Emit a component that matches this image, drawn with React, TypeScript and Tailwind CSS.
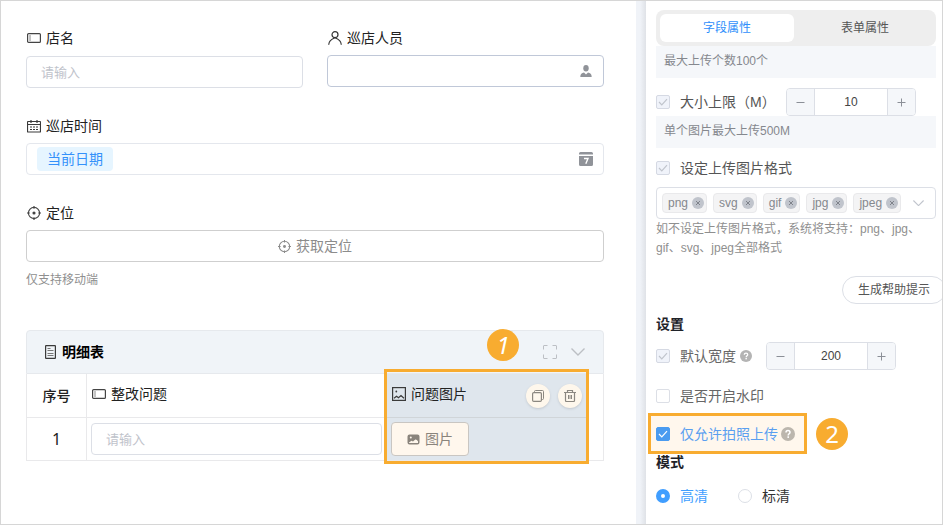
import React, { useState } from 'react';

const FONT = "font-['Liberation_Sans','Noto_Sans_CJK_SC',sans-serif]";

const TextFieldIcon = () => (
  <svg width="14" height="10" viewBox="0 0 14 10" fill="none" stroke="#444" className="shrink-0">
    <rect x="0.6" y="0.6" width="12.8" height="8.8" rx="1" strokeWidth="1.2" />
    <path d="M3 2v6" stroke="#888" />
  </svg>
);

const PersonIcon = () => (
  <svg width="14" height="14" viewBox="0 0 14 14" fill="none" stroke="#333" strokeWidth="1.2" className="shrink-0">
    <circle cx="7" cy="3.7" r="3" />
    <path d="M0.7 13.8c0-3.2 2.2-5.6 6.3-7.1 4.1 1.5 6.3 3.9 6.3 7.1" />
  </svg>
);

const CalendarIcon = () => (
  <svg width="14" height="14" viewBox="0 0 14 14" fill="none" stroke="#3a3a3a" className="shrink-0">
    <rect x="0.5" y="2.5" width="13" height="10.5" rx="0.5" strokeWidth="1.2" />
    <path d="M0.5 5.5h13M4 1v3M10 1v3" strokeWidth="1.2" />
    <path d="M3 8h8M3 10.5h8" strokeDasharray="2 1" />
  </svg>
);

const TargetIcon = ({ size, color }: { size: number; color: string }) => (
  <svg width={size} height={size} viewBox="0 0 15 15" fill="none" stroke={color} strokeWidth="1.2" className="shrink-0">
    <circle cx="7.5" cy="7.5" r="6" />
    <path d="M7.5 0v3M7.5 12v3M0 7.5h3M12 7.5h3" />
    <circle cx="7.5" cy="7.5" r="1.7" fill={color} stroke="none" />
  </svg>
);

const SheetIcon = () => (
  <svg width="11" height="14" viewBox="0 0 11 14" fill="none" stroke="#3a3a3a" className="shrink-0">
    <rect x="0.6" y="0.6" width="9.8" height="12.8" rx="0.5" strokeWidth="1.2" />
    <path d="M2.5 3.5h3M2.5 5.5h6M2.5 8.5h6M2.5 10.5h6" stroke="#777" />
  </svg>
);

const PictureIcon = () => (
  <svg width="14" height="14" viewBox="0 0 14 14" fill="none" stroke="#3a3a3a" className="shrink-0">
    <rect x="0.6" y="0.6" width="12.8" height="12.8" strokeWidth="1.2" />
    <path d="M2 11.2l2.5-2 2 1.500L9 8.500l3 2.700" strokeWidth="1.200" />
    <circle cx="4.3" cy="4.5" r="0.9" fill="#3a3a3a" stroke="none" />
  </svg>
);

const HelpIcon = ({ size, color }: { size: number; color: string }) => (
  <svg width={size} height={size} viewBox="0 0 14 14" fill="none" className="shrink-0">
    <circle cx="7" cy="7" r="7" fill={color} />
    <path d="M5 5.6c0-1.3.8-2 2-2s2 .7 2 1.8C9 6.8 7.2 6.8 7.2 8.4" stroke="#fff" strokeWidth="1.5" />
    <rect x="6.4" y="9.3" width="1.6" height="1.6" fill="#fff" />
  </svg>
);

const Chevron = ({ width, color }: { width: number; color: string }) => (
  <svg width={width} height={width / 2 + 1} viewBox="0 0 14 8" fill="none" stroke={color} strokeWidth="1.4">
    <path d="M0.5 0.5L7 7l6.5-6.5" />
  </svg>
);

interface FieldLabelProps {
  icon: React.ReactNode;
  text: string;
  htmlFor?: string;
}

const FieldLabel: React.FC<FieldLabelProps> = ({ icon, text, htmlFor }) => (
  <label htmlFor={htmlFor} className="flex items-center gap-[5px] h-6 pl-px text-sm text-[#222]">
    {icon}
    {text}
  </label>
);

interface CheckProps {
  id: string;
  checked: boolean;
  disabled?: boolean;
  onChange?: (v: boolean) => void;
}

const Check: React.FC<CheckProps> = ({ id, checked, disabled, onChange }) => (
  <span className="grid shrink-0 place-items-center">
    <input
      id={id}
      type="checkbox"
      checked={checked}
      disabled={disabled}
      onChange={(e) => onChange?.(e.target.checked)}
      className="col-start-1 row-start-1 size-3.5 appearance-none rounded-xs border border-[#dcdfe6] bg-white checked:border-[#4a9bf0] checked:bg-[#4a9bf0] disabled:border-[#d5d9e3] disabled:bg-[#f0f3fa]"
    />
    {checked && (
      <svg width="10" height="8" viewBox="0 0 10 8" fill="none" stroke={disabled ? '#c0c4cc' : '#fff'} strokeWidth="1.2" className="pointer-events-none col-start-1 row-start-1">
        <path d="M1 4l2.8 2.8L9 1.2" />
      </svg>
    )}
  </span>
);

interface StepperProps {
  label: string;
  value: number;
  setValue: (v: number) => void;
}

const Stepper: React.FC<StepperProps> = ({ label, value, setValue }) => (
  <div className="flex h-7 w-[130px] overflow-hidden rounded border border-[#dcdfe6]">
    <button type="button" aria-label={`${label} -`} onClick={() => setValue(value - 1)} className="grid w-7 shrink-0 place-items-center border-r border-[#dcdfe6] bg-[#f5f7fa]">
      <svg width="9" height="9" viewBox="0 0 9 9" stroke="#8b8f97"><path d="M0.5 4.5h8" /></svg>
    </button>
    <input
      aria-label={label}
      value={value}
      onChange={(e) => setValue(Number(e.target.value) || 0)}
      className="w-full min-w-0 bg-white text-center text-xs text-[#444] outline-none"
    />
    <button type="button" aria-label={`${label} +`} onClick={() => setValue(value + 1)} className="grid w-7 shrink-0 place-items-center border-l border-[#dcdfe6] bg-[#f5f7fa]">
      <svg width="9" height="9" viewBox="0 0 9 9" stroke="#8b8f97"><path d="M0.5 4.5h8M4.5 0.5v8" /></svg>
    </button>
  </div>
);

const FormCanvas = () => (
  <main className="min-w-0 flex-1 pt-[25px] pr-8 pl-[25px]">
    <div className="grid grid-cols-2 gap-x-6">
      <div>
        <FieldLabel icon={<TextFieldIcon />} text="店名" htmlFor="shop" />
        <input id="shop" placeholder="请输入" className="mt-1.5 block h-8 w-full rounded border border-[#dcdfe6] px-3.5 text-[13px] placeholder:text-[#bfc3cb]" />
      </div>
      <div>
        <FieldLabel icon={<PersonIcon />} text="巡店人员" htmlFor="staff" />
        <div className="mt-[5px] flex h-8 items-center rounded border border-[#c0c8d8] pr-[11px]">
          <input id="staff" className="h-full min-w-0 flex-1 px-3 text-[13px] outline-none" />
          <svg width="12" height="12" viewBox="0 0 12 12" fill="#909399">
            <ellipse cx="6" cy="3.3" rx="2.7" ry="3.3" />
            <path d="M0.3 12c0-3 1.5-4 3.7-4.500l2 2 2-2c2.200 .5 3.700 1.500 3.700 4.500z" />
          </svg>
        </div>
      </div>
    </div>

    <div className="mt-[26px]">
      <FieldLabel icon={<CalendarIcon />} text="巡店时间" />
      <div className="mt-[5px] flex h-8 items-center justify-between rounded border border-[#e4e7ed] px-2.5">
        <span className="rounded bg-[#e6f5ff] px-2.5 text-sm leading-6 text-[#3491fa]">当前日期</span>
        <svg width="14" height="14" viewBox="0 0 14 14" fill="#909399">
          <path d="M0 1.5Q0 0 1.5 0h11Q14 0 14 1.5V2.5H0zM0 4h14v8.500Q14 14 12.500 14h-11Q0 14 0 12.500z" />
          <path d="M5 6.5h4L6.8 11.7" fill="none" stroke="#fff" strokeWidth="1.4" />
        </svg>
      </div>
    </div>

    <div className="mt-[26px]">
      <FieldLabel icon={<TargetIcon size={14} color="#444" />} text="定位" htmlFor="locate" />
      <button id="locate" type="button" className="mt-[5px] flex h-8 w-full items-center justify-center gap-[5px] rounded border border-[#cfcfcf] text-sm text-[#8c8c8c]">
        <TargetIcon size={13} color="#8c8c8c" />
        获取定位
      </button>
      <p className="mt-[9px] text-xs leading-[18px] text-[#8f8f8f]">仅支持移动端</p>
    </div>

    <section className="relative mt-[41px]">
      <div className="flex h-11 items-center rounded-t border border-[#e6e9ed] bg-[#f0f4f8] px-[18px]">
        <SheetIcon />
        <h2 className="ml-1.5 flex-1 text-sm font-bold text-black">明细表</h2>
        <button type="button" aria-label="全屏">
          <svg width="14" height="14" viewBox="0 0 14 14" fill="none" stroke="#bcbfc4">
            <path d="M0.5 4.5V1q0-.5.5-.5h3.500M9.500 0.500H13q.5 0 .5.500v3.500M13.500 9.500V13q0 .5-.5.500H9.500M4.500 13.500H1q-.5 0-.5-.5V9.500" />
          </svg>
        </button>
        <button type="button" aria-label="收起" className="ml-3.5">
          <Chevron width={14} color="#bcbfc4" />
        </button>
      </div>
      <table className="w-full table-fixed border-separate border-spacing-0 border-r border-b border-l border-[#e9e9eb] text-sm">
        <colgroup>
          <col className="w-[60px]" />
          <col />
          <col className="w-[203px]" />
          <col className="w-[15px]" />
        </colgroup>
        <thead>
          <tr className="h-11">
            <th scope="col" className="border-r border-b border-[#e9e9eb] font-medium text-[#222]">序号</th>
            <th scope="col" className="border-b border-[#e9e9eb] pb-1 pl-1 font-normal">
              <FieldLabel icon={<TextFieldIcon />} text="整改问题" htmlFor="problem" />
            </th>
            <th scope="col" className="border-b border-[#d0d5d9] bg-[#dfe6ed] pr-1.5 pl-1.5 font-normal">
              <div className="flex items-center gap-2">
                <div className="flex-1 pb-1"><FieldLabel icon={<PictureIcon />} text="问题图片" htmlFor="upload" /></div>
                <button type="button" aria-label="复制" className="grid size-6 place-items-center rounded-full bg-[#fef7ec] shadow-sm">
                  <svg width="12" height="12" viewBox="0 0 12 12" fill="none" stroke="#8b8780">
                    <rect x="0.6" y="2.6" width="8.8" height="8.8" rx="1.2" strokeWidth="1.2" />
                    <path d="M2.5 2.500V1.500q0-1 1-1h7q1 0 1 1v7q0 1-1 1H9.500" />
                  </svg>
                </button>
                <button type="button" aria-label="删除" className="grid size-6 place-items-center rounded-full bg-[#fef7ec] shadow-sm">
                  <svg width="12" height="12" viewBox="0 0 12 12" fill="none" stroke="#8b8780">
                    <path d="M0 2.5h12M3.500 2V0.500h5V2M1.500 3v7.500q0 1 1 1h7q1 0 1-1V3" strokeWidth="1.2" />
                    <path d="M4.500 5v4M6 5v4M7.500 5v4" />
                  </svg>
                </button>
              </div>
            </th>
            <th />
          </tr>
        </thead>
        <tbody>
          <tr className="h-[42px]">
            <td className="border-r border-[#e9e9eb] text-center font-['Noto_Sans'] text-base text-[#222]">1</td>
            <td className="pr-[3px] pl-1">
              <input id="problem" placeholder="请输入" className="block h-8 w-full rounded border border-[#dcdfe6] px-3.5 text-[13px] placeholder:text-[#bfc3cb]" />
            </td>
            <td className="bg-[#dfe6ed] pl-1.5">
              <button id="upload" type="button" className="flex h-[34px] items-center gap-[5px] rounded border border-[#c9c6c2] bg-[#fff7ed] px-[15px] text-sm text-[#8a847c]">
                <svg width="13" height="11" viewBox="0 0 13 11" fill="#8a847c">
                  <path fillRule="evenodd" d="M2.500 0.500h8q2 0 2 2v6q0 2-2 2h-8q-2 0-2-2v-6q0-2 2-2zM2 9h9V7.200Q9.500 5 8.300 5.500L6 7.500 4.500 6.800 2 8.500zM3.800 2.500a1 1 0 1 0 0 2 1 1 0 0 0 0-2z" />
                </svg>
                图片
              </button>
            </td>
            <td />
          </tr>
        </tbody>
      </table>
      {/* callout around the picture column */}
      <div className="pointer-events-none absolute top-[39px] right-[15px] -bottom-[3px] w-[205px] border-3 border-[#f8ac30]" />
      <div className="pointer-events-none absolute -top-px right-[85px] grid size-8 place-items-center rounded-full bg-[#f8ac30] font-['Noto_Sans'] text-2xl leading-8 text-white italic">1</div>
    </section>
  </main>
);

const FORMATS = ['png', 'svg', 'gif', 'jpg', 'jpeg'];

const PropertyPanel = () => {
  const [maxSize, setMaxSize] = useState(10);
  const [width, setWidth] = useState(200);
  const [formats, setFormats] = useState(FORMATS);
  const [watermark, setWatermark] = useState(false);
  const [cameraOnly, setCameraOnly] = useState(true);
  const [mode, setMode] = useState('hd');

  return (
    <aside className="w-[296px] shrink-0 bg-white pt-[9px] pr-1.5 pl-2.5">
      <div className="flex h-9 rounded-lg bg-[#eee] p-1 text-xs">
        <button type="button" className="flex-1 rounded-md bg-white text-[#2f8ffb]">字段属性</button>
        <button type="button" className="flex-1 pl-1 text-[#555]">表单属性</button>
      </div>
      <p className="h-8 bg-[#f5f7fa] px-2 text-xs leading-[30px] text-[#85888e]">最大上传个数100个</p>

      <div className="mt-2.5 flex items-center">
        <Check id="size" checked disabled />
        <label htmlFor="size" className="ml-2.5 flex-1 text-sm whitespace-nowrap text-[#555]">大小上限（M）</label>
        <div className="mr-5"><Stepper label="大小上限" value={maxSize} setValue={setMaxSize} /></div>
      </div>
      <p className="h-8 bg-[#f5f7fa] px-2 text-xs leading-[30px] text-[#85888e]">单个图片最大上传500M</p>

      <div className="mt-2.5 flex h-5 items-center">
        <Check id="formats" checked disabled />
        <label htmlFor="formats" className="ml-2.5 text-sm text-[#555]">设定上传图片格式</label>
      </div>
      <div className="mt-[9px] flex h-8 items-center gap-1.5 rounded border border-[#dcdfe6] px-[5px]">
        {formats.map((f) => (
          <span key={f} className="flex h-5 items-center gap-1 rounded border border-[#e9e9eb] bg-[#f4f4f5] pr-0.5 pl-[5px] text-xs text-[#85888e]">
            {f}
            <button type="button" aria-label={`移除 ${f}`} onClick={() => setFormats(formats.filter((x) => x !== f))}>
              <svg width="12" height="12" viewBox="0 0 12 12" fill="none" stroke="#7f838b">
                <circle cx="6" cy="6" r="6" fill="#c0c4cc" stroke="none" />
                <path d="M4 4l4 4M8 4l-4 4" />
              </svg>
            </button>
          </span>
        ))}
        <button type="button" aria-label="展开" className="mr-1.5 ml-auto">
          <Chevron width={11} color="#c0c4cc" />
        </button>
      </div>
      <p className="pt-px text-xs leading-[19px] text-[#8f8f8f]">如不设定上传图片格式，系统将支持：png、jpg、<br />gif、svg、jpeg全部格式</p>

      <div className="mt-[18px] -mr-2.5 flex justify-end">
        <button type="button" className="h-7 rounded-full border border-[#dcdfe6] px-[15px] text-xs text-[#555]">生成帮助提示</button>
      </div>

      <h3 className="mt-2.5 text-sm leading-5 font-bold text-[#1f2329]">设置</h3>
      <div className="mt-2 flex items-center">
        <Check id="width" checked disabled />
        <label htmlFor="width" className="mr-1 ml-2.5 text-sm text-[#666]">默认宽度</label>
        <HelpIcon size={12} color="#b4b4b4" />
        <div className="mr-10 ml-auto"><Stepper label="默认宽度" value={width} setValue={setWidth} /></div>
      </div>
      <div className="mt-4 flex h-5 items-center">
        <Check id="watermark" checked={watermark} onChange={setWatermark} />
        <label htmlFor="watermark" className="ml-2.5 text-sm text-[#666]">是否开启水印</label>
      </div>
      <div className="mt-[7px] -ml-2 flex items-center gap-[9px]">
        <div className="flex h-[41px] w-[159px] items-center border-3 border-[#f8ac30] bg-[#fff7ed] pl-[5px]">
          <Check id="camera" checked={cameraOnly} onChange={setCameraOnly} />
          <label htmlFor="camera" className="mr-[3px] ml-2.5 text-sm text-[#5a9ff0]">仅允许拍照上传</label>
          <HelpIcon size={14} color="#bcb6ad" />
        </div>
        <span className="grid size-8 place-items-center rounded-full bg-[#f8ac30] font-['Noto_Sans'] text-2xl leading-8 text-white">2</span>
      </div>
      <h3 className="-mt-0.5 text-sm leading-5 font-bold text-[#1f2329]">模式</h3>
      <div className="mt-3.5 flex items-center gap-[30px] text-sm">
        <label className="flex items-center gap-2.5 text-[#333] has-checked:text-[#409eff]">
          <input type="radio" name="mode" checked={mode === 'hd'} onChange={() => setMode('hd')} className="size-3.5 appearance-none rounded-full border border-[#dcdfe6] bg-white checked:border-5 checked:border-[#409eff]" />
          高清
        </label>
        <label className="flex items-center gap-2.5 text-[#333] has-checked:text-[#409eff]">
          <input type="radio" name="mode" checked={mode === 'sd'} onChange={() => setMode('sd')} className="size-3.5 appearance-none rounded-full border border-[#dcdfe6] bg-white checked:border-5 checked:border-[#409eff]" />
          标清
        </label>
      </div>
    </aside>
  );
};

export default function App() {
  return (
    <div className={`flex min-h-screen overflow-hidden border border-[#d6d6d6] bg-white ${FONT}`}>
      <FormCanvas />
      <div className="w-2.5 shrink-0 bg-linear-to-r from-[#f0f3f8] from-40% to-[#dfe2e7]" />
      <PropertyPanel />
    </div>
  );
}
